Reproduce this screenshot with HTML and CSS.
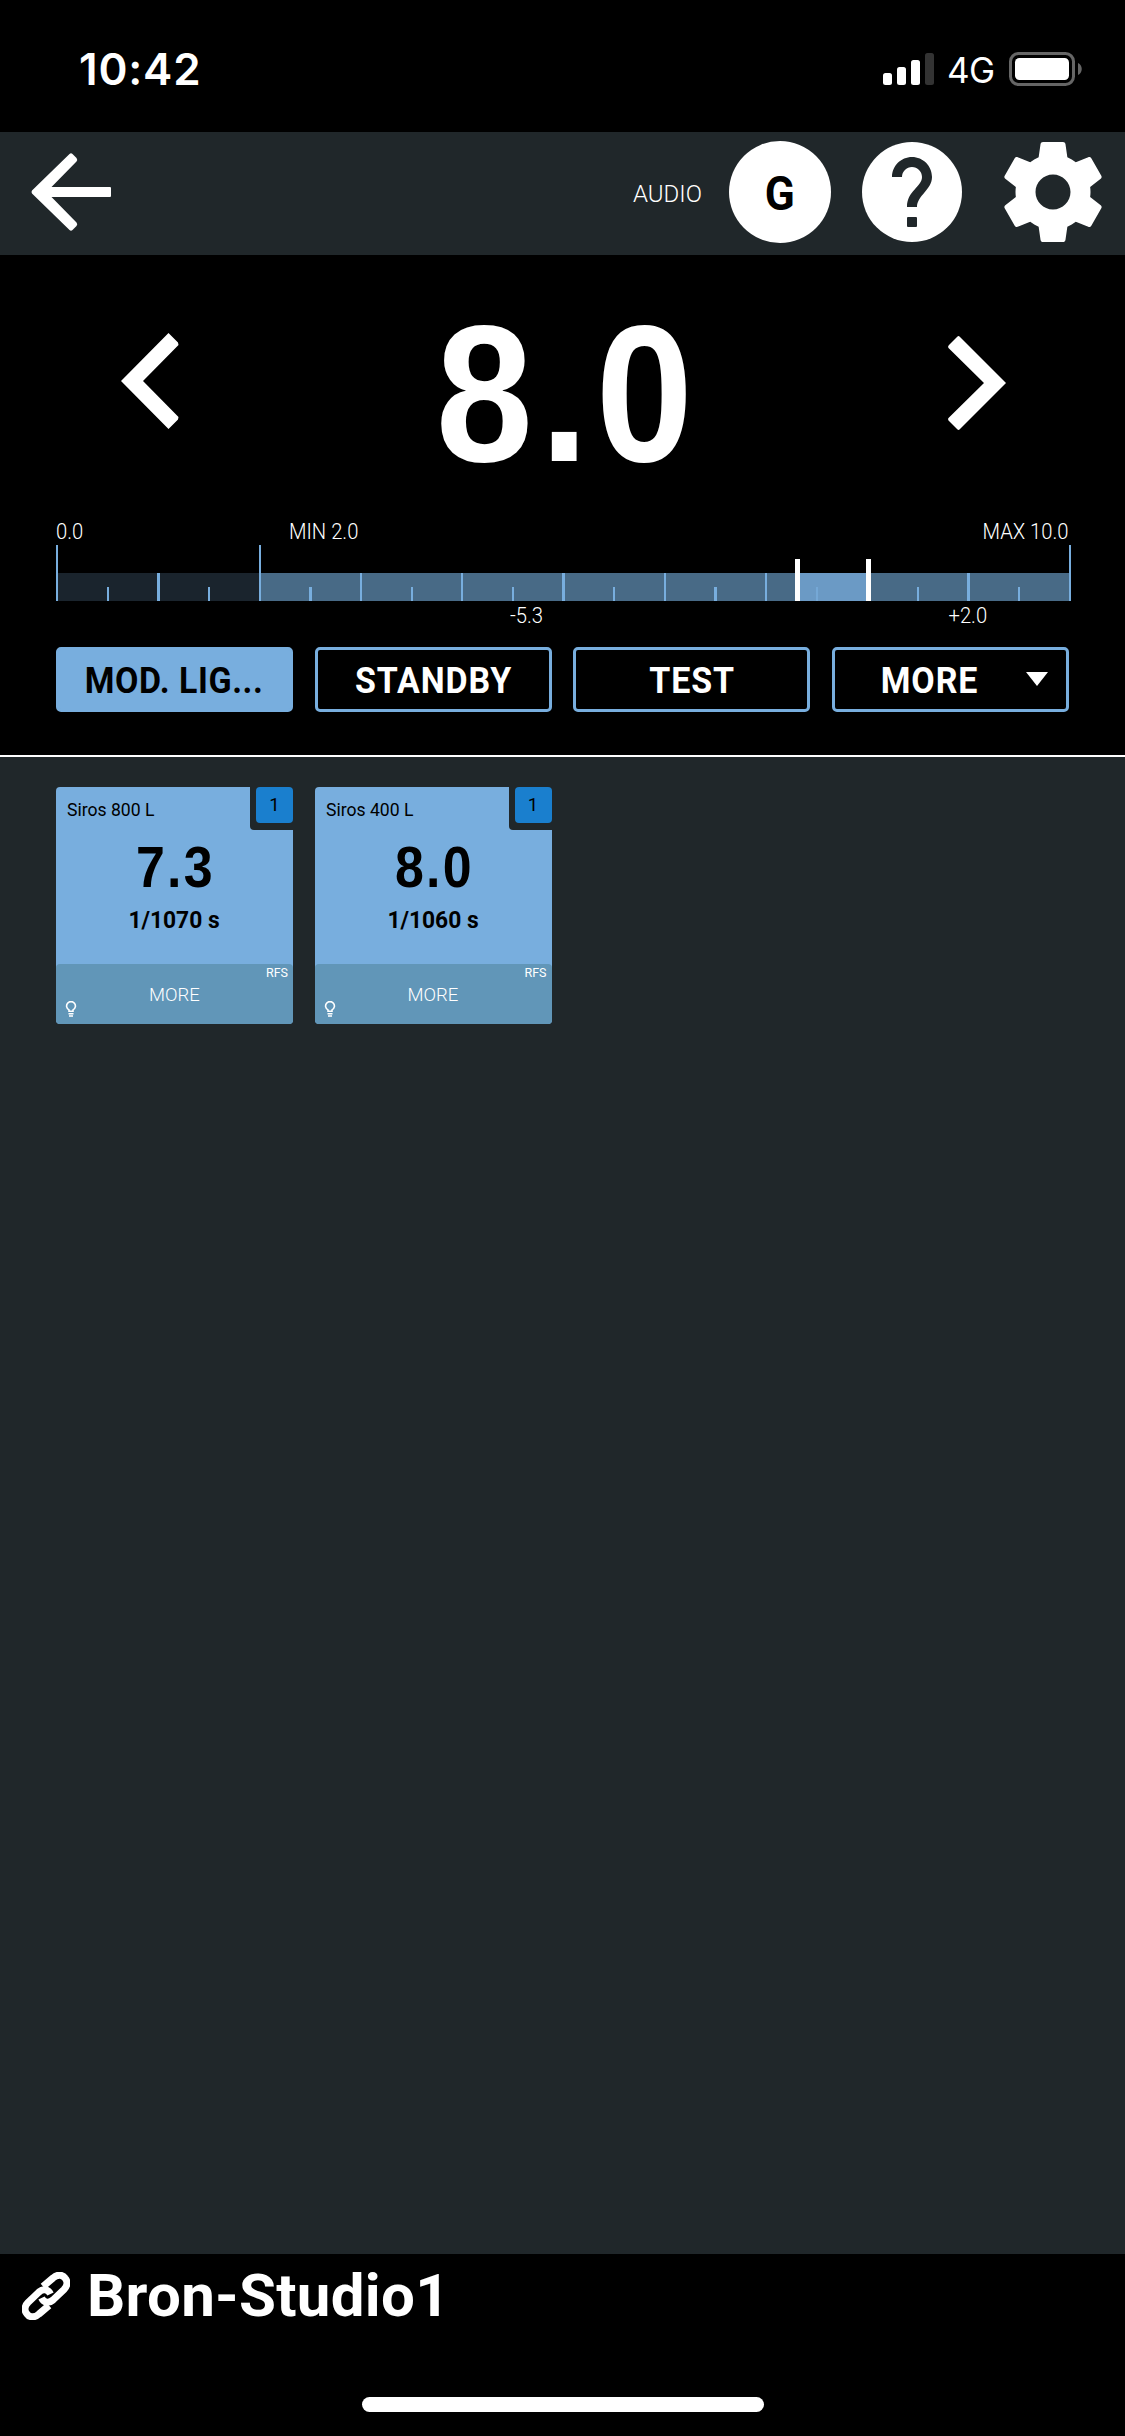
FILE: index.html
```html
<!DOCTYPE html>
<html lang="en">

<head>
    <meta charset="UTF-8">
    <meta name="viewport" content="width=device-width, initial-scale=1.0">
    <title>Bron-Studio1</title>
    <link rel="stylesheet" href="styles.css">
</head>

<body>
    <!-- status bar -->
    <div class="status">
        <span class="time">10:42</span>
        <svg class="signal" width="51" height="32" viewBox="0 0 51 32" fill="#fff">
            <rect x="0" y="20" width="9" height="12" rx="2.5" />
            <rect x="14" y="14" width="9" height="18" rx="2.5" />
            <rect x="28" y="7" width="9" height="25" rx="2.5" />
            <rect x="42" y="0" width="9" height="32" rx="2.5" fill="#333" />
        </svg>
        <span class="network">4G</span>
        <svg class="battery" width="73" height="34" viewBox="0 0 73 34">
            <rect x="1.5" y="1.5" width="63" height="31" rx="8" fill="none" stroke="#666" stroke-width="3" />
            <rect x="6" y="6" width="54" height="22" rx="4.5" fill="#fff" />
            <path d="M69 11c5 2 5 10 0 12z" fill="#666" />
        </svg>
    </div>

    <!-- top navigation -->
    <div class="nav">
        <a href="#" class="back">
            <svg width="82" height="80" viewBox="0 0 82 80">
                <path d="M2 41.500Q1 40 2 38.500L39.500 2Q41 .5 42.500 2L46.500 6Q48 8 46.500 9.500L21.500 35H80q1 0 1 1v8q0 1-1 1H21.500L46.500 70.500Q48 72 46.500 74L42.500 78Q41 79.500 39.500 78z" fill="#fff" />
            </svg>
        </a>
        <span class="audio">AUDIO</span>
        <a href="#" class="group"><span>G</span></a>
        <a href="#" class="help">
            <svg width="120" height="120" viewBox="0 0 24 24">
                <circle cx="12" cy="12" r="10" fill="#fff" />
                <path d="M12 5c-2.210 0-4 1.790-4 4h2c0-1.100.9-2 2-2s2 .9 2 2c0 2-3 2.750-3 6h2c0-2.250 3-3.500 3-6 0-2.210-1.790-4-4-4z" fill="#20272a" />
                <rect x="11" y="17" width="2" height="2" rx=".2" fill="#20272a" />
            </svg>
        </a>
        <a href="#" class="settings">
            <svg width="120" height="120" viewBox="0 0 24 24" fill="#fff">
                <path d="M19.430 12.980c.04-.32.07-.64.07-.98s-.03-.66-.07-.98l2.110-1.650c.19-.15.24-.42.12-.64l-2-3.460c-.12-.22-.39-.3-.61-.22l-2.490 1c-.52-.4-1.080-.73-1.690-.98l-.38-2.650C14.460 2.180 14.250 2 14 2h-4c-.25 0-.46.18-.49.42l-.38 2.650c-.61.25-1.170.59-1.690.98l-2.490-1c-.23-.09-.49 0-.61.22l-2 3.460c-.13.22-.07.49.12.64l2.110 1.650c-.04.32-.07.65-.07.98s.03.66.07.98l-2.110 1.650c-.19.15-.24.42-.12.64l2 3.460c.12.22.39.3.61.22l2.490-1c.52.4 1.080.73 1.690.98l.38 2.650c.03.24.24.42.49.42h4c.25 0 .46-.18.49-.42l.38-2.650c.61-.25 1.170-.59 1.690-.98l2.490 1c.23.09.49 0 .61-.22l2-3.460c.12-.22.07-.49-.12-.64l-2.110-1.650zM12 15.500c-1.930 0-3.500-1.570-3.500-3.500s1.570-3.500 3.500-3.500 3.500 1.570 3.500 3.500-1.570 3.500-3.500 3.500z" />
            </svg>
        </a>
    </div>

    <!-- power control -->
    <div class="control">
        <div class="power">
            <a href="#" class="prev">
                <svg width="58" height="96" viewBox="0 0 58 96">
                    <path d="M0 48L47.500 0 57 9.500 57.500 12 22 48 57.500 84 57 86.500 47.500 96z" fill="#fff" />
                </svg>
            </a>
            <div class="value"><span>8.0</span></div>
            <a href="#" class="next">
                <svg width="58" height="94" viewBox="0 0 58 94">
                    <path d="M58 47L11.500.5Q10.500-.5 9 1L1 9Q-.5 10.500.5 12L36 47 .5 82Q-.5 83.500 1 85L9 93q1.500 1.500 2.500.5z" fill="#fff" />
                </svg>
            </a>
        </div>

        <div class="labels top">
            <span class="zero">0.0</span>
            <span class="min">MIN 2.0</span>
            <span class="max">MAX 10.0</span>
        </div>
        <svg class="ruler" width="1015" height="56" viewBox="0 0 1015 56" shape-rendering="crispEdges">
            <rect x="0" y="28" width="203" height="28" fill="#1a242d" />
            <rect x="203" y="28" width="812" height="28" fill="#486a86" />
            <g fill="#78aede">
                <rect x="0" y="0" width="2" height="56" />
                <rect x="51" y="42" width="2" height="14" />
                <rect x="101" y="28" width="3" height="28" />
                <rect x="152" y="42" width="2" height="14" />
                <rect x="203" y="0" width="2" height="56" />
                <rect x="253" y="42" width="3" height="14" />
                <rect x="304" y="28" width="2" height="28" />
                <rect x="355" y="42" width="2" height="14" />
                <rect x="405" y="28" width="2" height="28" />
                <rect x="456" y="42" width="2" height="14" />
                <rect x="506" y="28" width="3" height="28" />
                <rect x="557" y="42" width="2" height="14" />
                <rect x="608" y="28" width="2" height="28" />
                <rect x="658" y="42" width="3" height="14" />
                <rect x="709" y="28" width="2" height="28" />
                <rect x="861" y="42" width="2" height="14" />
                <rect x="911" y="28" width="3" height="28" />
                <rect x="962" y="42" width="2" height="14" />
                <rect x="1013" y="0" width="2" height="56" />
            </g>
            <!-- range of the selected lamps -->
            <rect x="744" y="28" width="66" height="28" fill="#6b9ac5" />
            <rect x="760" y="42" width="2" height="14" fill="#75a8d6" />
            <rect x="739" y="14" width="5" height="42" fill="#fff" />
            <rect x="810" y="14" width="5" height="42" fill="#fff" />
        </svg>
        <div class="labels bottom">
            <span class="minus">-5.3</span>
            <span class="plus">+2.0</span>
        </div>

        <div class="buttons">
            <a href="#" class="btn current"><span>MOD. LIG...</span></a>
            <a href="#" class="btn"><span>STANDBY</span></a>
            <a href="#" class="btn"><span>TEST</span></a>
            <a href="#" class="btn more"><span>MORE</span><i class="caret"></i></a>
        </div>
    </div>

    <!-- lamps -->
    <div class="lamps">
        <div class="lamp">
            <div class="lamp-main">
                <div class="corner"><span>1</span></div>
                <p class="name"><span>Siros 800 L</span></p>
                <p class="num"><span>7.3</span></p>
                <p class="speed"><span>1/1070 s</span></p>
            </div>
            <div class="lamp-foot">
                <span class="rfs">RFS</span>
                <span class="lamp-more">MORE</span>
                <svg class="bulb" width="12" height="16" viewBox="0 0 12 16">
                    <path d="M4 10.300V8.900A4.400 4.400 0 1 1 8 8.900v1.400z" fill="none" stroke="#fff" stroke-width="1.600" />
                    <path d="M3.500 12.700h5M4 15h4" stroke="#fff" stroke-width="1.500" />
                </svg>
            </div>
        </div>
        <div class="lamp">
            <div class="lamp-main">
                <div class="corner"><span>1</span></div>
                <p class="name"><span>Siros 400 L</span></p>
                <p class="num"><span>8.0</span></p>
                <p class="speed"><span>1/1060 s</span></p>
            </div>
            <div class="lamp-foot">
                <span class="rfs">RFS</span>
                <span class="lamp-more">MORE</span>
                <svg class="bulb" width="12" height="16" viewBox="0 0 12 16">
                    <path d="M4 10.300V8.900A4.400 4.400 0 1 1 8 8.900v1.400z" fill="none" stroke="#fff" stroke-width="1.600" />
                    <path d="M3.500 12.700h5M4 15h4" stroke="#fff" stroke-width="1.500" />
                </svg>
            </div>
        </div>
    </div>

    <!-- studio name -->
    <div class="footer">
        <div class="studio">
            <svg width="48" height="48" viewBox="0 0 48 48" fill="none" stroke="#fff" stroke-width="7" stroke-linecap="butt">
                <path d="M21 14.500L31 6C36 1.500 41 3 43 6C46 9.500 45.500 14 42 17.500L31 28C27 31.500 22 31 19.500 26" />
                <path d="M27 33.500L17 42C12 46.500 7 45 5 42C2 38.500 2.500 34 6 30.500L17 20C21 16.500 26 17 28.500 22" />
            </svg>
            <span>Bron-Studio1</span>
        </div>
        <div class="home"></div>
    </div>
</body>

</html>
```
FILE: styles.css
```css
* {
    margin: 0;
    padding: 0;
    box-sizing: border-box;
}

body {
    display: flex;
    flex-direction: column;
    width: 1125px;
    height: 2436px;
    background-color: #000;
    color: #fff;
    font-family: Roboto, "Liberation Sans", sans-serif;
    overflow: hidden;
}

a {
    color: inherit;
    text-decoration: none;
}

svg {
    display: block;
}

span {
    white-space: nowrap;
}

/* status bar */

.status {
    display: flex;
    align-items: flex-start;
    height: 132px;
    padding: 0 43px 0 79px;
    font-family: Inter, sans-serif;
}

.time {
    margin-top: 43px;
    margin-right: auto;
    font-size: 44px;
    font-weight: 600;
    line-height: 52px;
    letter-spacing: .8px;
}

.signal {
    margin-top: 53px;
}

.network {
    width: 49px;
    margin: 50px 13px 0 13px;
    font-size: 35px;
    font-weight: 400;
    line-height: 40px;
    letter-spacing: -.6px;
}

.battery {
    margin-top: 52px;
}

/* top navigation */

.nav {
    display: flex;
    align-items: center;
    height: 123px;
    padding: 0 12px 3px 30px;
    background-color: #20272a;
}

.back {
    margin-right: auto;
}

.audio {
    margin: 3px 27px 0 0;
    font-size: 24px;
    font-weight: 300;
    line-height: 30px;
}

.group {
    display: flex;
    align-items: center;
    justify-content: center;
    width: 102px;
    height: 102px;
    margin-right: 31px;
    border-radius: 50%;
    background-color: #fff;
    color: #000;
    font-size: 49px;
    font-weight: 700;
    line-height: 60px;
}

.group span {
    padding-top: 4px;
    transform: scaleX(.9);
}

.help {
    margin-right: 31px;
}

.help svg {
    margin: 0 -10px;
}

/* power control */

.control {
    height: 502px;
    padding: 0 54px 0 56px;
    border-bottom: 2px solid #fff;
}

.power {
    display: grid;
    grid-template-columns: 58px 1fr 58px;
    align-items: start;
    height: 263px;
    padding: 0 65px;
}

.prev {
    margin-top: 78px;
}

.next {
    margin-top: 81px;
}

.value {
    display: flex;
    justify-content: center;
    margin-top: 39px;
    font-family: "Liberation Sans", Arial, sans-serif;
    font-size: 194px;
    font-weight: 700;
    line-height: 200px;
}

.value span {
    letter-spacing: 8px;
    margin-right: -8px;
    transform: scaleX(.9);
}

.labels {
    display: flex;
    height: 28px;
    font-size: 21.5px;
    font-weight: 300;
    line-height: 28px;
}

.labels span {
    transform: scaleX(.94);
    transform-origin: left;
}

.labels.top {
    height: 27px;
}

.labels.bottom {
    padding-top: 1px;
}

.zero {
    width: 233px;
}

.labels .max {
    margin-left: auto;
    margin-right: 2px;
    transform-origin: right;
}

.minus {
    margin-left: 454px;
}

.labels .plus {
    margin-left: auto;
    margin-right: 84px;
    transform-origin: right;
}

.buttons {
    display: flex;
    justify-content: space-between;
    width: 1013px;
    margin-top: 18px;
}

.btn {
    display: flex;
    align-items: center;
    justify-content: center;
    width: 237px;
    height: 65px;
    padding-top: 2px;
    border: 3px solid #78aede;
    border-radius: 5px;
    font-size: 36.5px;
    font-weight: 700;
    line-height: 44px;
}

.btn span {
    letter-spacing: 1px;
    transform: scaleX(.93);
}

.btn.current {
    background-color: #78aede;
    color: #000;
}

.btn.current span {
    letter-spacing: .6px;
}

.btn.more {
    justify-content: space-between;
    padding-right: 18px;
    padding-left: 42px;
}

.caret {
    margin-top: -3px;
    border: 11px solid transparent;
    border-top: 14px solid #fff;
    border-bottom: 0;
}

/* lamps */

.lamps {
    display: flex;
    flex: 1;
    align-items: flex-start;
    gap: 21.5px;
    padding: 30px 56px;
    background-color: #20272a;
}

.lamp {
    width: 237px;
    height: 237px;
    border-radius: 4px;
    background-color: #78aede;
    color: #000;
}

.lamp-main {
    position: relative;
    height: 177px;
    padding-top: 13px;
    text-align: center;
}

.lamp-main span {
    display: inline-block;
}

/* group number, sits in a notch of the card */

.corner {
    position: absolute;
    top: 0;
    right: 0;
    width: 43px;
    height: 43px;
    padding: 0 0 7px 6px;
    border-radius: 0 0 0 4px;
    background-color: #20272a;
}

.lamp-main .corner span {
    display: block;
    height: 36px;
    border-radius: 4px;
    background-color: #1a7fce;
    font-size: 18.5px;
    line-height: 37px;
}

.name {
    padding-left: 11px;
    font-size: 18.5px;
    line-height: 20px;
    text-align: left;
}

.name span {
    transform: scaleX(.95);
    transform-origin: left;
}

.num {
    margin-top: 16px;
    font-family: "Liberation Sans", Arial, sans-serif;
    font-size: 57px;
    font-weight: 700;
    line-height: 62px;
}

.num span {
    letter-spacing: 2.5px;
    margin-right: -2.5px;
    transform: scaleX(.91);
}

.speed {
    margin-top: 8px;
    font-size: 24px;
    font-weight: 700;
    line-height: 28px;
}

.speed span {
    transform: scaleX(.95);
}

.lamp-foot {
    display: grid;
    grid-template-columns: 1fr 1fr 1fr;
    height: 60px;
    padding: 0 5px 7px 9px;
    border-radius: 4px;
    background-color: #6196b8;
    color: #fff;
}

.rfs {
    grid-column: 3;
    grid-row: 1;
    justify-self: end;
    font-size: 12.5px;
    line-height: 18px;
}

.lamp-more {
    grid-column: 2;
    grid-row: 1;
    justify-self: center;
    margin-top: 17px;
    margin-right: 4px;
    font-size: 18.5px;
    font-weight: 300;
    line-height: 29px;
}

.bulb {
    grid-column: 1;
    grid-row: 1;
    align-self: end;
}

/* studio name */

.footer {
    height: 182px;
}

.studio {
    display: flex;
    align-items: center;
    height: 83px;
    padding: 0 22px;
    font-size: 60px;
    font-weight: 700;
}

.studio span {
    margin-left: 17px;
    line-height: 70px;
    letter-spacing: .3px;
}

.home {
    width: 402px;
    height: 15px;
    margin: 60px auto 0;
    border-radius: 8px;
    background-color: #fff;
}
```
